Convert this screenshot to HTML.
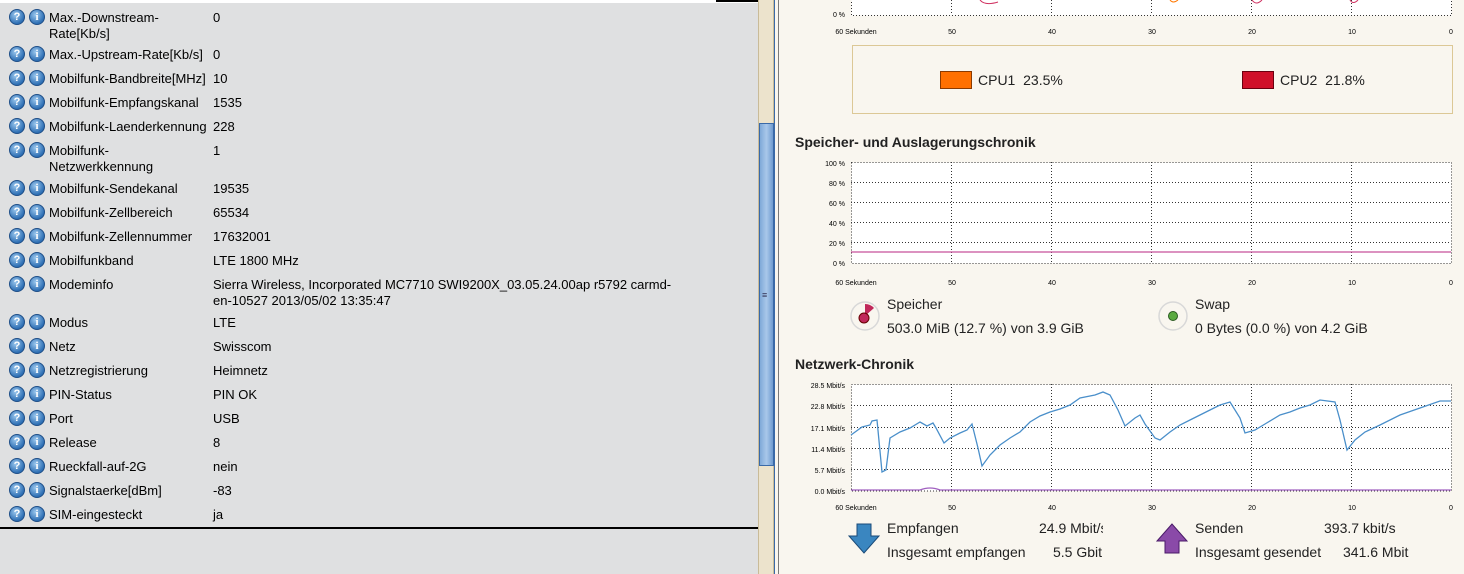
<!DOCTYPE html>
<html><head><meta charset="utf-8"><style>
*{margin:0;padding:0;box-sizing:border-box}
body{width:1464px;height:574px;overflow:hidden;position:relative;background:#f9f6ef;font-family:"Liberation Sans",sans-serif;font-size:13px;color:#000}
#left{position:absolute;left:0;top:0;width:758px;height:574px;background:#dfe0e1}
.r{position:absolute;left:0;height:24px}
.q,.i{position:absolute;top:0;width:16px;height:16px;border-radius:50%;background:radial-gradient(circle at 40% 35%,#9cc8ee,#2e6fb4 70%);border:1px solid #1f4f88;color:#fff;font-weight:bold;font-size:11px;text-align:center;line-height:14px}
.q{left:9px}.i{left:29px;font-family:"Liberation Serif",serif}
.l{position:absolute;left:49px;top:1px;line-height:16px;width:165px}
.v{position:absolute;left:213px;top:1px;line-height:16px;width:470px}
.t{position:absolute;font-size:13px;color:#222}
.h{position:absolute;font-weight:bold;font-size:14px;color:#222}
</style></head><body>
<div id="left">
<div style="position:absolute;left:0;top:0;width:758px;height:3px;background:#fff"></div>
<div style="position:absolute;left:716px;top:0;width:42px;height:2px;background:#000"></div>
<div class="r" style="top:9px"><div class="q">?</div><div class="i">i</div><div class="l">Max.-Downstream-<br>Rate[Kb/s]</div><div class="v">0</div></div>
<div class="r" style="top:46px"><div class="q">?</div><div class="i">i</div><div class="l">Max.-Upstream-Rate[Kb/s]</div><div class="v">0</div></div>
<div class="r" style="top:70px"><div class="q">?</div><div class="i">i</div><div class="l">Mobilfunk-Bandbreite[MHz]</div><div class="v">10</div></div>
<div class="r" style="top:94px"><div class="q">?</div><div class="i">i</div><div class="l">Mobilfunk-Empfangskanal</div><div class="v">1535</div></div>
<div class="r" style="top:118px"><div class="q">?</div><div class="i">i</div><div class="l">Mobilfunk-Laenderkennung</div><div class="v">228</div></div>
<div class="r" style="top:142px"><div class="q">?</div><div class="i">i</div><div class="l">Mobilfunk-<br>Netzwerkkennung</div><div class="v">1</div></div>
<div class="r" style="top:180px"><div class="q">?</div><div class="i">i</div><div class="l">Mobilfunk-Sendekanal</div><div class="v">19535</div></div>
<div class="r" style="top:204px"><div class="q">?</div><div class="i">i</div><div class="l">Mobilfunk-Zellbereich</div><div class="v">65534</div></div>
<div class="r" style="top:228px"><div class="q">?</div><div class="i">i</div><div class="l">Mobilfunk-Zellennummer</div><div class="v">17632001</div></div>
<div class="r" style="top:252px"><div class="q">?</div><div class="i">i</div><div class="l">Mobilfunkband</div><div class="v">LTE 1800 MHz</div></div>
<div class="r" style="top:276px"><div class="q">?</div><div class="i">i</div><div class="l">Modeminfo</div><div class="v">Sierra Wireless, Incorporated MC7710 SWI9200X_03.05.24.00ap r5792 carmd-<br>en-10527 2013/05/02 13:35:47</div></div>
<div class="r" style="top:314px"><div class="q">?</div><div class="i">i</div><div class="l">Modus</div><div class="v">LTE</div></div>
<div class="r" style="top:338px"><div class="q">?</div><div class="i">i</div><div class="l">Netz</div><div class="v">Swisscom</div></div>
<div class="r" style="top:362px"><div class="q">?</div><div class="i">i</div><div class="l">Netzregistrierung</div><div class="v">Heimnetz</div></div>
<div class="r" style="top:386px"><div class="q">?</div><div class="i">i</div><div class="l">PIN-Status</div><div class="v">PIN OK</div></div>
<div class="r" style="top:410px"><div class="q">?</div><div class="i">i</div><div class="l">Port</div><div class="v">USB</div></div>
<div class="r" style="top:434px"><div class="q">?</div><div class="i">i</div><div class="l">Release</div><div class="v">8</div></div>
<div class="r" style="top:458px"><div class="q">?</div><div class="i">i</div><div class="l">Rueckfall-auf-2G</div><div class="v">nein</div></div>
<div class="r" style="top:482px"><div class="q">?</div><div class="i">i</div><div class="l">Signalstaerke[dBm]</div><div class="v">-83</div></div>
<div class="r" style="top:506px"><div class="q">?</div><div class="i">i</div><div class="l">SIM-eingesteckt</div><div class="v">ja</div></div>
<div style="position:absolute;left:0;top:527px;width:758px;height:2px;background:#000"></div>
</div>
<div style="position:absolute;left:758px;top:0;width:16px;height:574px;background:#ece3cc;border-left:1px solid #c9bb98;border-right:1px solid #c9bb98"></div>
<div style="position:absolute;left:759px;top:123px;width:15px;height:343px;background:linear-gradient(90deg,#7fa9d8,#a9c8ea,#6f9bd0);border:1px solid #3a6aa8"></div>
<div style="position:absolute;left:762px;top:290px;font-size:9px;color:#335">≡</div>
<div style="position:absolute;left:774px;top:0;width:5px;height:574px;background:#f9f6ef;border-left:1px solid #3a6aa8;border-right:1px solid #7a7a7a"></div>

<svg style="position:absolute;left:0;top:0" width="1464" height="574" font-family="Liberation Sans" font-size="7">
<g stroke="#333" stroke-width="1" stroke-dasharray="1,2" fill="none">
<!-- cpu -->
<rect x="851.5" y="-5" width="600" height="20.5" fill="#fff"/>
<line x1="951.5" y1="0" x2="951.5" y2="15"/><line x1="1051.5" y1="0" x2="1051.5" y2="15"/><line x1="1151.5" y1="0" x2="1151.5" y2="15"/><line x1="1251.5" y1="0" x2="1251.5" y2="15"/><line x1="1351.5" y1="0" x2="1351.5" y2="15"/>
<!-- mem -->
<rect x="851.5" y="162.5" width="600" height="101" fill="#fff"/>
<line x1="851" y1="182.5" x2="1451" y2="182.5"/><line x1="851" y1="202.5" x2="1451" y2="202.5"/><line x1="851" y1="222.5" x2="1451" y2="222.5"/><line x1="851" y1="242.5" x2="1451" y2="242.5"/>
<line x1="951.5" y1="162" x2="951.5" y2="264"/><line x1="1051.5" y1="162" x2="1051.5" y2="264"/><line x1="1151.5" y1="162" x2="1151.5" y2="264"/><line x1="1251.5" y1="162" x2="1251.5" y2="264"/><line x1="1351.5" y1="162" x2="1351.5" y2="264"/>
<!-- net -->
<rect x="851.5" y="384.5" width="600" height="106.5" fill="#fff"/>
<line x1="851" y1="405.5" x2="1451" y2="405.5"/><line x1="851" y1="427.5" x2="1451" y2="427.5"/><line x1="851" y1="448.5" x2="1451" y2="448.5"/><line x1="851" y1="469.5" x2="1451" y2="469.5"/>
<line x1="951.5" y1="384" x2="951.5" y2="491"/><line x1="1051.5" y1="384" x2="1051.5" y2="491"/><line x1="1151.5" y1="384" x2="1151.5" y2="491"/><line x1="1251.5" y1="384" x2="1251.5" y2="491"/><line x1="1351.5" y1="384" x2="1351.5" y2="491"/>
</g>
<path d="M980 0 Q985 6 998 2" stroke="#d03060" fill="none"/>
<path d="M1170 0 Q1173 4 1178 0" stroke="#f70" fill="none"/>
<path d="M1252 0 Q1256 6 1262 0 M1350 0 Q1353 5 1358 0" stroke="#d03060" fill="none"/>
<line x1="851" y1="252" x2="1451" y2="252" stroke="#c8509a" stroke-width="1.2"/>
<polyline fill="none" stroke="#4a8fca" stroke-width="1.3" points="851,435 862,427 870,425 872,421 877,420 882,472 886,470 890,438 900,432 910,428 920,422 927,426 933,423 936,428 944,443 950,438 960,433 967,430 972,424 978,448 982,466 990,455 1000,445 1010,438 1020,432 1030,422 1040,416 1050,412 1060,409 1070,405 1080,398 1095,395 1103,392 1110,395 1118,410 1125,426 1135,418 1140,415 1145,424 1155,438 1160,440 1170,432 1180,425 1190,420 1200,415 1210,410 1220,405 1230,402 1240,418 1245,433 1255,430 1265,424 1280,415 1290,412 1300,408 1310,405 1320,400 1335,402 1340,420 1347,450 1355,440 1365,432 1380,425 1400,415 1420,408 1440,401 1451,401"/>
<path d="M851 490 L920 490 Q930 486 940 490 L1451 490" stroke="#a060c0" fill="none" stroke-width="1.3"/>
<g fill="#000" text-anchor="end">
<text x="845" y="17">0 %</text>
<text x="845" y="166">100 %</text><text x="845" y="186">80 %</text><text x="845" y="206">60 %</text><text x="845" y="226">40 %</text><text x="845" y="246">20 %</text><text x="845" y="266">0 %</text>
<text x="845" y="388">28.5 Mbit/s</text><text x="845" y="409">22.8 Mbit/s</text><text x="845" y="431">17.1 Mbit/s</text><text x="845" y="452">11.4 Mbit/s</text><text x="845" y="473">5.7 Mbit/s</text><text x="845" y="494">0.0 Mbit/s</text>
</g>
<g fill="#000" text-anchor="middle">
<text x="856" y="34">60 Sekunden</text><text x="952" y="34">50</text><text x="1052" y="34">40</text><text x="1152" y="34">30</text><text x="1252" y="34">20</text><text x="1352" y="34">10</text><text x="1451" y="34">0</text>
<text x="856" y="285">60 Sekunden</text><text x="952" y="285">50</text><text x="1052" y="285">40</text><text x="1152" y="285">30</text><text x="1252" y="285">20</text><text x="1352" y="285">10</text><text x="1451" y="285">0</text>
<text x="856" y="510">60 Sekunden</text><text x="952" y="510">50</text><text x="1052" y="510">40</text><text x="1152" y="510">30</text><text x="1252" y="510">20</text><text x="1352" y="510">10</text><text x="1451" y="510">0</text>
</g>
<rect x="852.5" y="45.5" width="600" height="68" fill="#f9f6ef" stroke="#dcc896"/>
<rect x="940.5" y="71.5" width="31" height="17" fill="#ff7000" stroke="#8a3a00"/>
<rect x="1242.5" y="71.5" width="31" height="17" fill="#d0102a" stroke="#6a0010"/>
<circle cx="865" cy="316" r="14" fill="#f9f6ef" stroke="#d8d8d8" stroke-width="1.5"/>
<path d="M865 316 L865 304 A12 12 0 0 1 874 308 Z" fill="#c0285a"/>
<circle cx="864" cy="318" r="5" fill="#c0285a" stroke="#600"/>
<circle cx="1173" cy="316" r="14" fill="#f9f6ef" stroke="#d8d8d8" stroke-width="1.5"/>
<circle cx="1173" cy="316" r="4.5" fill="#5aaa40" stroke="#2a5a20"/>
<path d="M857 524 h14 v12 h8 l-15 17 l-15 -17 h8 z" fill="#3a86c0" stroke="#1a4a78"/>
<path d="M1172 524 l-15 17 h8 v12 h14 v-12 h8 z" fill="#8a4aa8" stroke="#4a1a68"/>
</svg>
<div class="t" style="left:978px;top:72px;font-size:14px">CPU1&nbsp; 23.5%</div>
<div class="t" style="left:1280px;top:72px;font-size:14px">CPU2&nbsp; 21.8%</div>
<div class="h" style="left:795px;top:134px">Speicher- und Auslagerungschronik</div>
<div class="t" style="left:887px;top:296px;font-size:14px">Speicher</div>
<div class="t" style="left:887px;top:320px;font-size:14px">503.0 MiB (12.7 %) von 3.9 GiB</div>
<div class="t" style="left:1195px;top:296px;font-size:14px">Swap</div>
<div class="t" style="left:1195px;top:320px;font-size:14px">0 Bytes (0.0 %) von 4.2 GiB</div>
<div class="h" style="left:795px;top:356px">Netzwerk-Chronik</div>
<div class="t" style="left:887px;top:520px;font-size:14px">Empfangen</div>
<div class="t" style="left:887px;top:544px;font-size:14px">Insgesamt empfangen</div>
<div class="t" style="left:1039px;top:520px;font-size:14px;width:64px;overflow:hidden;white-space:nowrap">24.9 Mbit/s</div>
<div class="t" style="left:1053px;top:544px;font-size:14px">5.5 Gbit</div>
<div class="t" style="left:1195px;top:520px;font-size:14px">Senden</div>
<div class="t" style="left:1195px;top:544px;font-size:14px">Insgesamt gesendet</div>
<div class="t" style="left:1324px;top:520px;font-size:14px">393.7 kbit/s</div>
<div class="t" style="left:1343px;top:544px;font-size:14px">341.6 Mbit</div>
</body></html>
